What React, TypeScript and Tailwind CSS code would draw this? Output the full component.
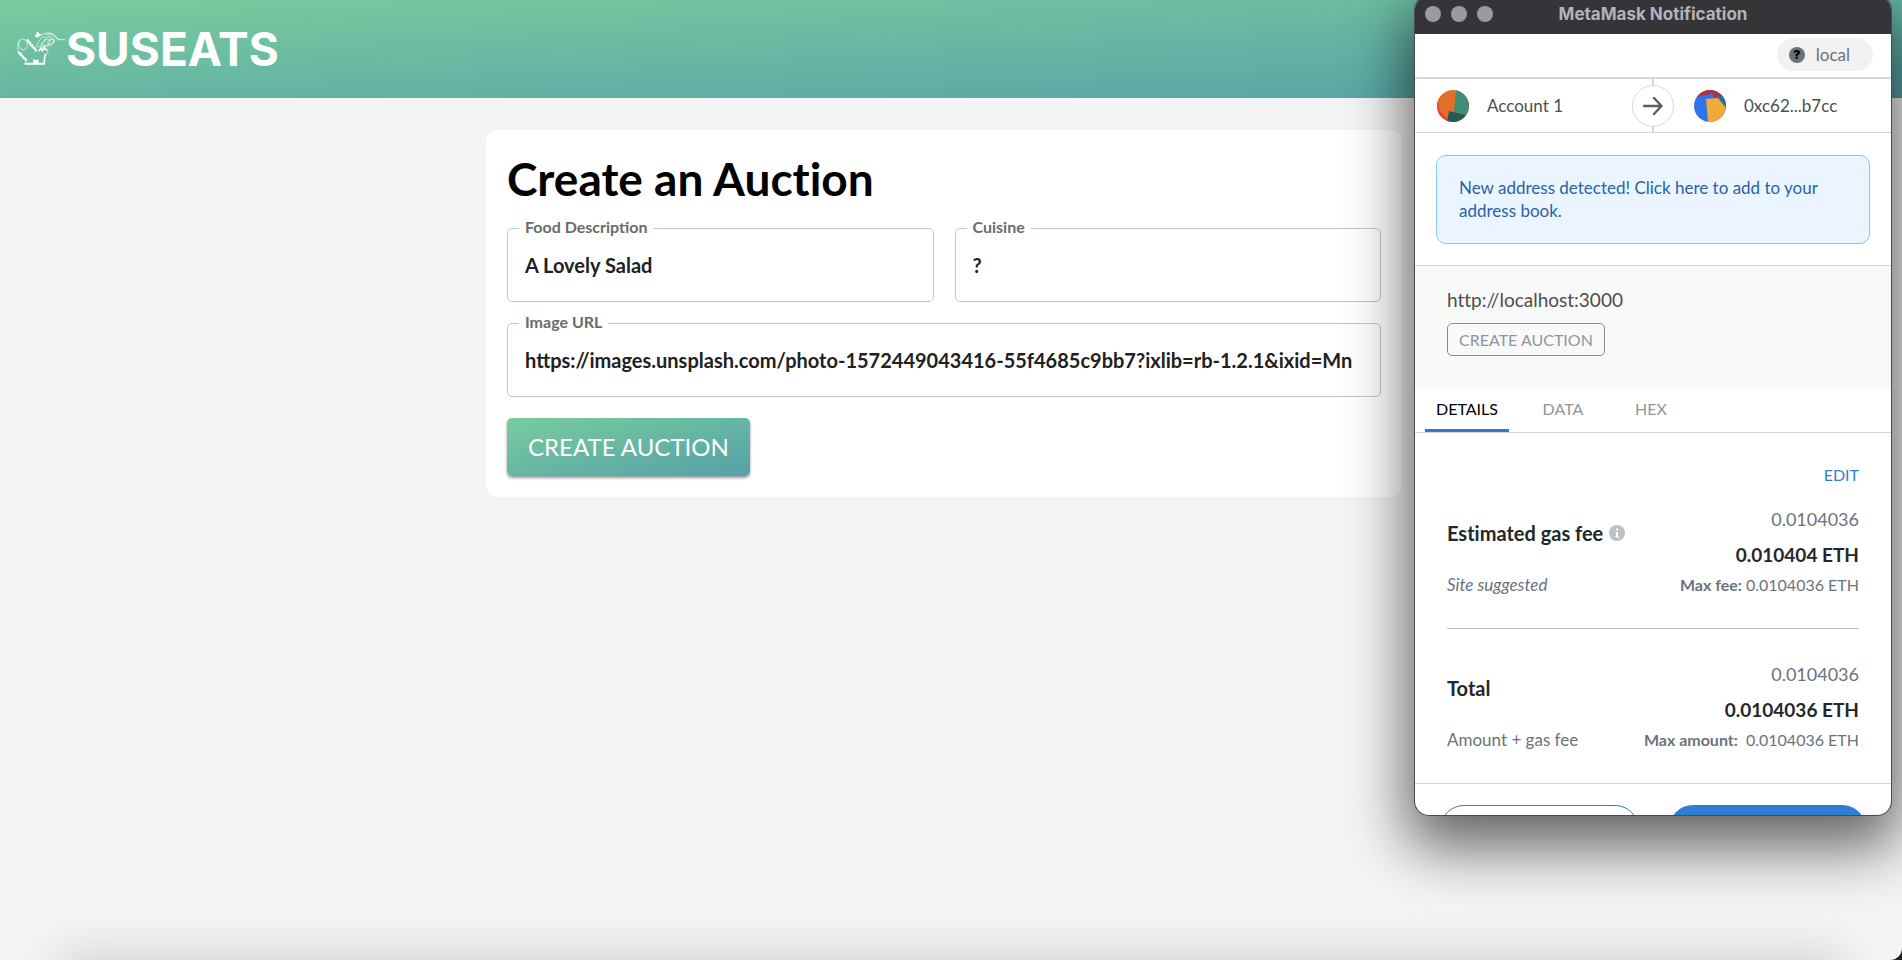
import { useState } from "react";
import type { ReactNode } from "react";

const TABS = ["DETAILS", "DATA", "HEX"];

function ElephantLogo() {
  return (
    <svg viewBox="0 0 144 102" className="h-[34px] w-12" fill="none" stroke="white" strokeLinecap="round" aria-hidden="true">
      <g strokeWidth="3" strokeOpacity="0.65">
        <ellipse cx="18" cy="37" rx="13" ry="16" transform="rotate(-12 18 37)" />
        <path d="M7 26C1 34 1 50 5 62l4 8" />
        <path d="M72 10c10-8 22-9 32-6s16 19 26 19h13" />
        <path d="M86 8c10-3 18-2 25 4s10 12 18 12" />
        <path d="M56 46c6-10 10-20 18-28 8-6 14-4 12 4s-12 18-22 24" />
        <path d="M72 40c4-12 12-20 22-18s10 10 2 14-16 6-20 4" />
        <path d="M90 16c8-4 18 0 20 8s-6 16-16 18-16 0-20 4" />
        <ellipse cx="102" cy="30" rx="10" ry="7" transform="rotate(-35 102 30)" />
        <path d="M92 52c4 8-2 12-6 18" />
        <path d="M26 78v14M50 82v14" />
      </g>
      <path d="M32 24l4 7 4 2 0 6 6 1 1 6 6 3 4 7" strokeWidth="6" />
      <path d="M6 62l8 8 6 8 7 5" strokeWidth="7" />
      <path d="M25 95h56" strokeWidth="6" />
      <path d="M50 84h14v10H50z" fill="white" strokeWidth="1" />
      <path d="M61 2l5 7M57 12l12-3M62 14l-3-5" strokeWidth="6" />
      <path d="M66 56l6-8 4 8 6-9 6 7" strokeWidth="5" />
      <path d="M85 68c-3 8-3 18-3 26" strokeWidth="5" />
    </svg>
  );
}

interface FieldProps {
  id: string;
  label: string;
  value: string;
  className?: string;
}

function Field({ id, label, value, className = "" }: FieldProps) {
  const [text, setText] = useState(value);
  return (
    <div className={`relative min-w-0 ${className}`}>
      <label
        htmlFor={id}
        className="absolute -top-3 left-3 bg-white px-1.5 text-base leading-[22px] font-bold text-[#6b6b6b]"
      >
        {label}
      </label>
      <div className="rounded-[5px] border border-[#c4c4c4] px-[17px]">
        <input
          id={id}
          value={text}
          onChange={(e) => setText(e.target.value)}
          className="block h-[72px] w-full bg-transparent text-xl font-bold text-[#212121] outline-none"
        />
      </div>
    </div>
  );
}

interface FeeProps {
  title: string;
  icon?: ReactNode;
  plain: string;
  amount: string;
  note: ReactNode;
  max: ReactNode;
}

function FeeBlock({ title, icon, plain, amount, note, max }: FeeProps) {
  return (
    <div>
      <div className="flex items-center justify-between">
        <h3 className="flex items-center gap-1.5 pb-2 text-xl font-bold text-[#24272a]">
          {title}
          {icon}
        </h3>
        <div className="text-right text-[19px] leading-9">
          <p className="text-lg leading-9 text-[#6a737d]">{plain}</p>
          <p className="font-bold text-[#24272a]">{amount}</p>
        </div>
      </div>
      <div className="flex items-center justify-between leading-6 text-[#6a737d]">
        <span className="text-[17px]">{note}</span>
        <span className="text-base">{max}</span>
      </div>
    </div>
  );
}

function WalletWindow() {
  const [tab, setTab] = useState("DETAILS");
  return (
    <section
      aria-label="MetaMask Notification"
      className="absolute -top-1 right-[11px] h-[819px] w-[476px] overflow-hidden rounded-[14px] bg-white font-[Lato,sans-serif] shadow-[0_0_0_1px_#4a4a4a,0_24px_60px_8px_rgba(0,0,0,0.6)] [font-variant-ligatures:none]"
    >
      <div className="relative flex h-[38px] items-center justify-center bg-[#353539] pb-0.5">
        <div className="absolute left-2.5 flex gap-2.5">
          <span className="size-4 rounded-full bg-[#9b9b9f]" />
          <span className="size-4 rounded-full bg-[#9b9b9f]" />
          <span className="size-4 rounded-full bg-[#9b9b9f]" />
        </div>
        <h2 className="font-[Inter,sans-serif] text-[17px] leading-6 font-bold text-[#b3b3b7]">MetaMask Notification</h2>
      </div>

      <div className="flex h-[43px] items-center justify-end pr-[18px] pb-0.5">
        <div className="flex h-[33px] items-center gap-[11px] rounded-full bg-[#f2f2f3] pr-[23px] pl-3 text-[17px] text-[#6a737d]">
          <span className="flex size-4 items-center justify-center rounded-full bg-[#6a737d] font-[Inter,sans-serif] text-xs font-black text-black">
            ?
          </span>
          local
        </div>
      </div>

      <div className="relative flex h-14 items-center border-t-2 border-b border-[#d6d9dc] text-[17px] text-[#4d4d4d]">
        <div className="flex w-1/2 items-center gap-[18px] pl-[22px]">
          <svg viewBox="0 0 32 32" className="size-8 rounded-full" aria-hidden="true">
            <rect width="32" height="32" fill="#e2702c" />
            <path d="M0 8l3 12 8 9v3H0z" fill="#f2432a" />
            <path d="M1 6l2 15 7 7 4-8z" fill="#e2702c" />
            <path d="M19 0h13v26l-15-4z" fill="#3f8d77" />
            <path d="M12 21l17 4-3 7H10z" fill="#265a57" />
          </svg>
          Account 1
        </div>
        <div className="flex w-1/2 items-center gap-[18px] pl-[41px]">
          <svg viewBox="0 0 32 32" className="size-8 rounded-full" aria-hidden="true">
            <rect width="32" height="32" fill="#3173ec" />
            <path d="M0 8L19 3l1 5 12-3V0H0z" fill="#b92d35" />
            <path d="M24 7l3-4 5 4v11z" fill="#2f6c8c" />
            <path d="M12 9l12-1 8 10v14H14z" fill="#f0a93b" />
          </svg>
          0xc62...b7cc
        </div>
        <span className="absolute top-0 left-1/2 h-full w-0.5 -translate-x-1/2 bg-[#d6d9dc]" />
        <span className="absolute top-1/2 left-1/2 flex size-[42px] -translate-1/2 items-center justify-center rounded-full border border-[#d6d9dc] bg-white">
          <svg viewBox="0 0 20 20" className="size-5" fill="none" stroke="#5b5d60" strokeWidth="2.4" strokeLinecap="round" strokeLinejoin="round" aria-hidden="true">
            <path d="M1 10h17M11 2l7.500 8-7.500 8" />
          </svg>
        </span>
      </div>

      <div className="border-b border-[#d6d9dc] px-[21px] pt-[22px] pb-[21px]">
        <button className="w-full rounded-[10px] border border-[#86c5fa] bg-[#eaf5ff] px-[22px] pt-5 pb-[21px] text-left text-[17px] leading-[23px] text-[#2a62a6]">
          New address detected! Click here to add to your address book.
        </button>
      </div>

      <div className="h-[122px] bg-[#f8faf9] px-8 pt-[22px]">
        <p className="text-[19px] leading-6 text-[#4d4d4d]">http://localhost:3000</p>
        <span className="mt-[11px] inline-block rounded-[5px] border border-[#8b8d92] px-[11px] text-base leading-[31px] text-[#939499]">
          CREATE AUCTION
        </span>
      </div>

      <div role="tablist" className="flex h-[45px] gap-5 border-b border-[#d6d9dc] px-2.5">
        {TABS.map((t) => (
          <button
            key={t}
            role="tab"
            aria-selected={t === tab}
            onClick={() => setTab(t)}
            className={`min-w-[68px] border-b-3 px-[11px] text-base ${
              t === tab ? "border-[#2f7cd3] text-black" : "border-transparent text-[#939499]"
            }`}
          >
            {t}
          </button>
        ))}
      </div>

      <div className="px-8 pt-[30px]">
        <div className="flex justify-end">
          <button className="text-base leading-6 text-[#2f7cd3]">EDIT</button>
        </div>
        <div className="mt-[14px] border-b border-[#bbc0c5] pb-[31px]">
          <FeeBlock
            title="Estimated gas fee"
            icon={
              <svg viewBox="0 0 16 16" className="size-4" aria-hidden="true">
                <circle cx="8" cy="8" r="8" fill="#bbc0c5" />
                <path d="M7 3.500h2v2H7zM6.500 7H9v4.500h1v1H6v-1h1V8h-.5z" fill="white" />
              </svg>
            }
            plain="0.0104036"
            amount="0.010404 ETH"
            note={<i>Site suggested</i>}
            max={
              <>
                <b>Max fee:</b> 0.0104036 ETH
              </>
            }
          />
        </div>
        <div className="pt-[27px] pb-[31px]">
          <FeeBlock
            title="Total"
            plain="0.0104036"
            amount="0.0104036 ETH"
            note="Amount + gas fee"
            max={
              <>
                <b className="mr-1">Max amount:</b> 0.0104036 ETH
              </>
            }
          />
        </div>
      </div>

      <div className="flex gap-[30px] border-t border-[#d6d9dc] px-[25px] pt-[21px]">
        <button aria-label="Reject" className="h-12 flex-1 rounded-full border border-[#2f7cd3] bg-white" />
        <button aria-label="Confirm" className="h-12 flex-1 rounded-full bg-[#2f7cd3]" />
      </div>
    </section>
  );
}

export default function App() {
  return (
    <div className="h-screen bg-[#222]">
      <div className="relative h-full overflow-hidden rounded-br-[12px] bg-[#f4f4f4] font-[Lato,sans-serif]">
        <header className="flex h-[98px] items-center bg-linear-to-br from-[#79cc9d] to-[#56a0a8] pl-[17px]">
          <a href="#" className="flex items-center gap-px text-white">
            <ElephantLogo />
            <span className="font-[Inter,sans-serif] text-[46px] leading-none font-bold">SUSEATS</span>
          </a>
        </header>

        <main className="pt-8 pr-3.5">
          <form
            onSubmit={(e) => e.preventDefault()}
            className="mx-auto w-full max-w-[916px] rounded-xl bg-white p-[21px]"
          >
            <h1 className="pb-[21px] text-[46px] leading-14 font-bold text-black [font-variant-ligatures:none]">
              Create an Auction
            </h1>
            <div className="grid grid-cols-2 gap-[21px]">
              <Field id="food" label="Food Description" value="A Lovely Salad" />
              <Field id="cuisine" label="Cuisine" value="?" />
              <Field
                id="image"
                label="Image URL"
                value="https://images.unsplash.com/photo-1572449043416-55f4685c9bb7?ixlib=rb-1.2.1&ixid=Mn"
                className="col-span-2"
              />
            </div>
            <button className="mt-[21px] block h-[58px] rounded-[5px] bg-linear-to-br from-[#79cc9d] to-[#56a0a8] px-[21px] text-2xl text-white shadow-[0_2px_3px_rgba(0,0,0,0.4)]">
              CREATE AUCTION
            </button>
          </form>
        </main>

        {/* shadow cast by whatever sits under the fold */}
        <div className="absolute inset-x-16 top-full h-20 shadow-[0_0_45px_8px_rgba(0,0,0,0.13)]" />

        <WalletWindow />
      </div>
    </div>
  );
}
